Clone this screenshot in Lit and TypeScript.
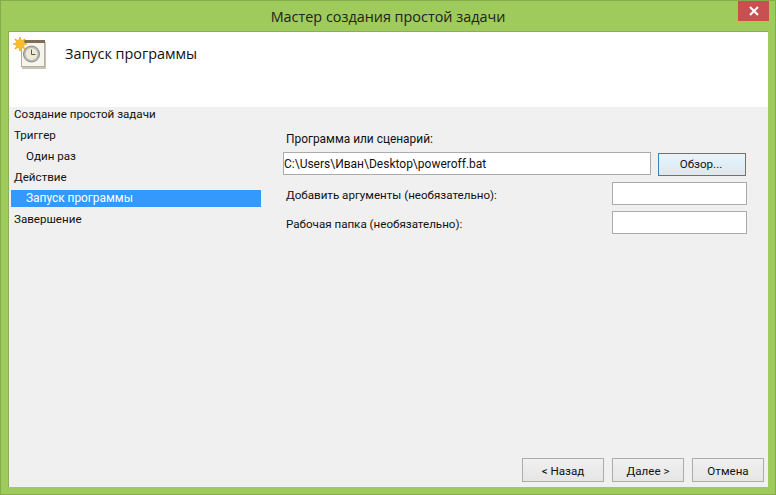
import { LitElement, html, css } from "lit";
import { customElement } from "lit/decorators.js";

@customElement("app-root")
export class AppRoot extends LitElement {
  static styles = css`
    :host { display: block; width: 776px; height: 495px; overflow: hidden; font-family: Roboto, "Open Sans", sans-serif; font-size: 11.6px; color: #111; }
    * { box-sizing: border-box; }
    .win { width: 776px; height: 495px; background: #9fca5c; border: 1px solid #86ac4c; display: flex; flex-direction: column; padding: 0 7px 7px; position: relative; }
    .title { height: 30px; flex: none; display: flex; align-items: center; justify-content: center; font-family: "Open Sans", sans-serif; font-size: 14.4px; color: #222; }
    .close { position: absolute; top: 0; right: 6px; width: 31px; height: 20px; background: #c75050; display: flex; align-items: center; justify-content: center; }
    .client { flex: 1; display: flex; flex-direction: column; border: 1px solid #8aae57; border-right: 0; border-bottom: 0; background: #f0f0f0; min-height: 0; }
    .head { height: 75px; flex: none; background: #fff; display: flex; padding: 2px 0 0 8px; gap: 14px; }
    .icon { width: 34px; height: 34px; flex: none; overflow: visible; }
    .head-text { font-family: "Open Sans", sans-serif; font-size: 14.4px; padding-top: 10px; line-height: 20px; }
    .main { flex: 1; display: flex; min-height: 0; position: relative; }
    .nav { width: 252px; flex: none; padding: 0 0 0 2px; margin-top: -3px; }
    .row { height: 21px; line-height: 16px; padding: 0 0 2px 3px; display: flex; align-items: center; }
    .row.sub { padding-left: 15px; }
    .row.sel { background: #3399ff; color: #fff; height: 17px; margin: 2px 0; padding-bottom: 2px; font-size: 11.9px; }
    .form { flex: 1; padding: 24px 21px 0 22px; display: flex; flex-direction: column; }
    .lbl { padding-left: 3px; height: 16px; line-height: 16px; }
    .lbl.top { font-size: 11.9px; }
    .prog { display: flex; gap: 7px; margin-top: 5px; align-items: flex-start; }
    input { font: inherit; color: #111; border: 1px solid #ababab; background: #fff; padding: 0; margin: 0; outline: none; }
    .prog input { width: 368px; height: 23px; font-size: 12px; }
    .browse { width: 88px; height: 23px; margin-top: 1px; border: 1px solid #3c7fb1; background: linear-gradient(#e9f5fc, #dfeef8 50%, #e6e6e6); font: inherit; color: #111; padding: 0 2px 2px 0; }
    .line { display: flex; justify-content: space-between; align-items: center; }
    .line .lbl { margin-top: 2px; }
    .line input { width: 135px; height: 23px; }
    .line.a { margin-top: 6px; }
    .line.b { margin-top: 6px; }
    .foot { position: absolute; right: 4px; bottom: 5px; display: flex; gap: 8px; }
    .foot button { height: 24px; width: 72px; border: 1px solid #acacac; background: linear-gradient(#f0f0f0, #e5e5e5); font: inherit; color: #111; padding: 1px 0 0; }
    .foot button.w { width: 82px; }
  `;

  render() {
    return html`
      <div class="win">
        <div class="title">Мастер создания простой задачи</div>
        <div class="close">
          <svg width="10" height="10" viewBox="0 0 10 10"><path d="M1 1 L9 9 M9 1 L1 9" stroke="#fff" stroke-width="2" fill="none"/></svg>
        </div>
        <div class="client">
          <div class="head">
            <svg class="icon" viewBox="0 0 34 34">
              <rect x="5" y="8" width="24" height="27" fill="#c9c4b8"/>
              <rect x="4.5" y="6.5" width="23" height="26" fill="#f7f4ec" stroke="#b5ada0" stroke-width="1"/>
              <rect x="4" y="6" width="24" height="3" fill="#7e6b58"/>
              <circle cx="14.5" cy="20" r="8" fill="#b9b9b4" stroke="#8d8d88"/>
              <circle cx="14.5" cy="20" r="6" fill="#efe9d8"/>
              <path d="M14.5 15.5 V20.5 H18.5" stroke="#555" stroke-width="1" fill="none"/>
              <g stroke="#f0a818" stroke-width="1.6">
                <path d="M3 3 V17 M-4 10 H10 M-2 5 L8 15 M8 5 L-2 15"/>
              </g>
              <circle cx="3" cy="10" r="4.8" fill="#f8bd2c"/>
            </svg>
            <div class="head-text">Запуск программы</div>
          </div>
          <div class="main">
            <div class="nav">
              <div class="row">Создание простой задачи</div>
              <div class="row">Триггер</div>
              <div class="row sub">Один раз</div>
              <div class="row">Действие</div>
              <div class="row sub sel">Запуск программы</div>
              <div class="row">Завершение</div>
            </div>
            <div class="form">
              <div class="lbl top">Программа или сценарий:</div>
              <div class="prog">
                <input value="C:\\Users\\Иван\\Desktop\\poweroff.bat" />
                <button class="browse">Обзор...</button>
              </div>
              <div class="line a"><div class="lbl">Добавить аргументы (необязательно):</div><input /></div>
              <div class="line b"><div class="lbl">Рабочая папка (необязательно):</div><input /></div>
            </div>
            <div class="foot">
              <button class="w">&lt; Назад</button>
              <button>Далее &gt;</button>
              <button>Отмена</button>
            </div>
          </div>
        </div>
      </div>
    `;
  }
}
